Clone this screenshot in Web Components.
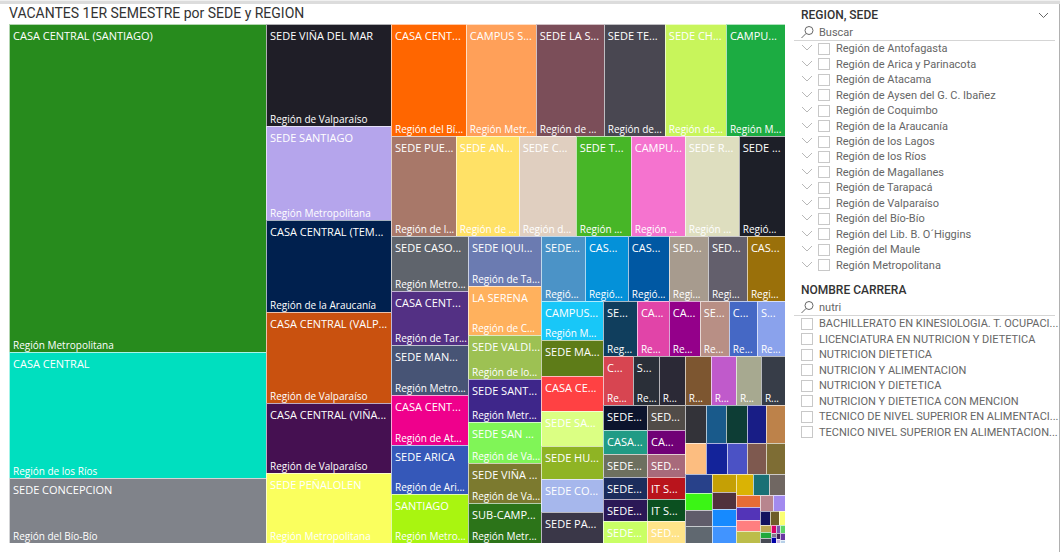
<!DOCTYPE html>
<html lang="es">
<head>
<meta charset="utf-8">
<title>Vacantes 1er semestre</title>
<style>
  html, body { margin: 0; background: #fff; }
  body { font-family: "Open Sans", "Noto Sans", sans-serif; color: #666; }
</style>
</head>
<body>
<vacancy-report></vacancy-report>

<script>
const sheet = (root, html) => {
  const t = document.createElement('template');
  t.innerHTML = html;
  root.append(t.content.cloneNode(true));
};

/* Treemap data: [share, colour, name, region] for a tile,
   [share, 'row' | 'col', [children]] for a group. */
const SMALLEST = [18, 'row', [
  [11, 'col', [[7, '#bba852'], [6, '#20a93c'], [5, '#474a54']]],
  [5, 'col', [[8, '#d80065'], [4, '#817b8a'], [6, '#0000a8']]],
  [4, 'col', [[8, '#7956ae'], [6, '#402458'], [4, '#c9b4df']]],
  [5, 'col', [[8, '#5dd668'], [7, '#6938a2'], [3, '#b7d0e8']]],
]];
const SMALLER = [48, 'row', [
  [24, 'col', [[12, '#e66c36'], [13, '#5334b8'], [11, '#ff7f80'], [12, '#bcbd4a']]],
  [25, 'col', [
    [16, 'row', [[13, '#b8858e'], [12, '#a28aef']]],
    [14, 'row', [[10, '#12145f'], [9, '#6e5d28'], [6, '#fbff73']]],
    SMALLEST,
  ]],
]];
const SMALL = [100, 'col', [
  [38, 'row', [[21, '#333339'], [20, '#195a8b'], [21, '#0d3d35'], [19, '#181d86'], [19, '#bd824a']]],
  [31, 'row', [[21, '#fcbd80'], [21, '#13239a'], [20, '#4b52c5'], [19, '#7e594f'], [19, '#7e6d34']]],
  [69, 'row', [
    [27, 'col', [[19, '#28418a'], [17, '#3bf515'], [16, '#605c6a'], [17, '#606870']]],
    [24, 'col', [[18, '#c5a005'], [17, '#51323c'], [17, '#168aff'], [17, '#4194ff']]],
    [49, 'col', [
      [21, 'row', [[17, '#dab304'], [16, '#197075'], [16, '#706762']]],
      SMALLER,
    ]],
  ]],
]];
const MEDIUM = [182, 'col', [
  [55, 'row', [
    [34, '#103e5d', 'SE...', 'Reg...'],
    [32, '#e144a8', 'CA...', 'Re...'],
    [31, '#94008a', 'CA...', 'Re...'],
    [29, '#b88f85', 'SE...', 'Re...'],
    [28, '#4568c5', 'C...', 'Re...'],
    [28, '#8aa2ec', 'S...', 'Re...'],
  ]],
  [49, 'row', [
    [30, '#d74551', 'C...', 'Re...'],
    [26, '#2a2f38', 'S...', 'Re...'],
    [26, '#2b2936', '', 'R...'],
    [26, '#7d5630', '', 'R...'],
    [25, '#c05acb', '', 'R...'],
    [25, '#a7a990', '', 'R...'],
    [24, '#373d48', '', 'R...'],
  ]],
  [138, 'row', [
    [44, 'col', [
      [25, '#0c142d', 'SEDE...'],
      [24, '#219b85', 'CASA...'],
      [23, '#6d705f', 'SEDE...'],
      [22, '#1c2d5c', 'SEDE...'],
      [22, '#2b1856', 'SEDE...'],
      [22, '#c9ff65', 'SEDE...'],
    ]],
    [38, 'col', [
      [25, '#514c48', 'SED...'],
      [24, '#700076', 'CA...'],
      [23, '#a86a7b', 'SED...'],
      [22, '#b9141c', 'IT S...'],
      [22, '#0b5020', 'IT S...'],
      [22, '#ffe489', 'SED...'],
    ]],
    SMALL,
  ]],
]];
const LARGE = [307, 'row', [
  [77, 'col', [
    [55, '#5f646c', 'SEDE CASO...', 'Región Metro...'],
    [54, '#533084', 'CASA CENT...', 'Región de Tar...'],
    [50, '#475475', 'SEDE MAN...', 'Región Metro...'],
    [50, '#ef008c', 'CASA CENT...', 'Región de At...'],
    [49, '#3558b9', 'SEDE ARICA', 'Región de Ari...'],
    [49, '#a9f510', 'SANTIAGO', 'Región Metro...'],
  ]],
  [73, 'col', [
    [50, '#6b7bb1', 'SEDE IQUI...', 'Región de Ta...'],
    [49, '#ffb15d', 'LA SERENA', 'Región de C...'],
    [44, '#9dc153', 'SEDE VALDI...', 'Región de lo...'],
    [43, '#3e268a', 'SEDE SANT...', 'Región Metr...'],
    [41, '#80f557', 'SEDE SAN ...', 'Región de Va...'],
    [40, '#7c7a2f', 'SEDE VIÑA ...', 'Región de Va...'],
    [40, '#2c7419', 'SUB-CAMP...', 'Región Metr...'],
  ]],
  [244, 'col', [
    [65, 'row', [
      [44, '#4b93c7', 'SEDE...', 'Regió...'],
      [43, '#0491d9', 'CAS...', 'Regió...'],
      [41, '#0058a3', 'CAS...', 'Regió...'],
      [39, '#a79b8e', 'SED...', 'Regi...'],
      [39, '#635f6c', 'SED...', 'Regi...'],
      [38, '#9a700a', 'CAS...', 'Regi...'],
    ]],
    [242, 'row', [
      [62, 'col', [
        [39, '#18c7f8', 'CAMPUS...', 'Región M...'],
        [36, '#5e7c18', 'SEDE MA...'],
        [35, '#ff4143', 'CASA CE...'],
        [35, '#dbff83', 'SEDE SA...'],
        [33, '#8fb424', 'SEDE HU...'],
        [33, '#a6b7ec', 'SEDE CO...'],
        [31, '#3a3748', 'SEDE PA...'],
      ]],
      MEDIUM,
    ]],
  ]],
]];
const DATA = [100, 'row', [
  [257, 'col', [
    [330, '#278b1d', 'CASA CENTRAL (SANTIAGO)', 'Región Metropolitana'],
    [125, '#00dfbf', 'CASA CENTRAL', 'Región de los Ríos'],
    [65, '#80838a', 'SEDE CONCEPCION', 'Región del Bío-Bío'],
  ]],
  [125, 'col', [
    [102, '#1f1e27', 'SEDE VIÑA DEL MAR', 'Región de Valparaíso'],
    [94, '#b5a5ec', 'SEDE SANTIAGO', 'Región Metropolitana'],
    [92, '#00204e', 'CASA CENTRAL (TEM...', 'Región de la Araucanía'],
    [91, '#c9510f', 'CASA CENTRAL (VALP...', 'Región de Valparaíso'],
    [70, '#451051', 'CASA CENTRAL (VIÑA...', 'Región de Valparaíso'],
    [70, '#faff5e', 'SEDE PEÑALOLEN', 'Región Metropolitana'],
  ]],
  [394, 'col', [
    [112, 'row', [
      [75, '#ff6600', 'CASA CENT...', 'Región del Bí...'],
      [70, '#ffa059', 'CAMPUS S...', 'Región Metr...'],
      [68, '#7b4e59', 'SEDE LA S...', 'Región de ...'],
      [61, '#494751', 'SEDE TE...', 'Región de...'],
      [61, '#c8f55b', 'SEDE CH...', 'Región de...'],
      [59, '#1cac42', 'CAMPU...', 'Región M...'],
    ]],
    [100, 'row', [
      [65, '#a87869', 'SEDE PUE...', 'Región de l...'],
      [63, '#ffe166', 'SEDE AN...', 'Región de ...'],
      [57, '#e0cfc0', 'SEDE C...', 'Región d...'],
      [55, '#47b627', 'SEDE T...', 'Región ...'],
      [54, '#f573cf', 'CAMPU...', 'Región ...'],
      [54, '#dedebf', 'SEDE R...', 'Región ...'],
      [46, '#1d1f28', 'SEDE ...', 'Regió...'],
    ]],
    LARGE,
  ]],
]];

class TreeTile extends HTMLElement {
  connectedCallback() {
    const root = this.attachShadow({ mode: 'open' });
    sheet(root, `<style>
      :host { display: flex; flex-direction: column; justify-content: space-between; box-sizing: border-box;
        min-width: 0; min-height: 0; overflow: hidden; color: #fff; white-space: nowrap;
        border-top: 1px solid rgba(255,255,255,.65); border-left: 1px solid rgba(255,255,255,.65); }
      .name { padding: 2px 0 0 3px; font-size: 11px; line-height: 17px; }
      .region { padding-left: 3px; margin-top: auto; font-size: 10px; line-height: 14px; }
    </style>`);
    for (const part of ['name', 'region']) {
      const text = this.getAttribute(part);
      if (!text) continue;
      const el = document.createElement('div');
      el.className = part;
      el.textContent = text;
      root.append(el);
    }
  }
}

class TreeGroup extends HTMLElement {
  connectedCallback() {
    sheet(this.attachShadow({ mode: 'open' }), `<style>
      :host { display: flex; min-width: 0; min-height: 0; }
      :host([flow="col"]) { flex-direction: column; }
    </style><slot></slot>`);
  }
}

class TreeMap extends HTMLElement {
  connectedCallback() {
    const root = this.attachShadow({ mode: 'open' });
    sheet(root, `<style>
      :host { display: flex; min-height: 0; }
    </style>`);
    root.append(this.build(DATA));
  }
  build([share, kind, third, region]) {
    let el;
    if (Array.isArray(third)) {
      el = document.createElement('tree-group');
      el.setAttribute('flow', kind);
      third.forEach(child => el.append(this.build(child)));
    } else {
      el = document.createElement('tree-tile');
      if (third) el.setAttribute('name', third);
      if (region) el.setAttribute('region', region);
      el.style.background = kind;
    }
    el.style.flex = `${share} 1 0px`;
    return el;
  }
}

class SlicerItem extends HTMLElement {
  connectedCallback() {
    const open = this.hasAttribute('expandable')
      ? `<button type="button" aria-label="Expandir"><svg width="12" height="7" viewBox="0 0 12 7"><path d="M1 1l5 5 5-5" fill="none" stroke="#b8b8b8"/></svg></button>` : '';
    sheet(this.attachShadow({ mode: 'open' }), `<style>
      :host { display: flex; align-items: center; min-width: 0; min-height: 0; }
      button { display: flex; align-items: center; width: 12px; height: 12px; padding: 0 0 2px; margin-right: 5px; border: 0; background: none; }
      label { display: flex; align-items: center; min-width: 0; gap: 6px; font: 11px/15px Roboto, sans-serif; white-space: nowrap; }
      input { appearance: none; flex: none; box-sizing: border-box; width: 12px; height: 12px; margin: 0; border: 1px solid #c8c8c8; background: #fff; }
    </style>${open}<label><input type="checkbox"><span><slot></slot></span></label>`);
  }
}

class SlicerPanel extends HTMLElement {
  connectedCallback() {
    const menu = this.hasAttribute('menu')
      ? `<button type="button" aria-label="Más"><svg width="11" height="7" viewBox="0 0 11 7"><path d="M1 1l4.500 4.500 4.500-4.500" fill="none" stroke="#666"/></svg></button>` : '';
    sheet(this.attachShadow({ mode: 'open' }), `<style>
      :host { display: block; }
      header { display: flex; justify-content: space-between; align-items: center; padding: 0 6px 0 7px; }
      h2 { margin: 0; font: 500 12px/18px Roboto, sans-serif; color: #333; }
      button { display: flex; padding: 0; border: 0; background: none; }
      .search { display: flex; align-items: center; gap: 5px; height: 16px; padding-left: 7px; border-bottom: 1px solid #d5d5d5; }
      svg { flex: none; }
      input { flex: 1; min-width: 0; height: 16px; padding: 0; border: 0; outline: 0; background: none; font: 11px Roboto, sans-serif; color: #666; }
      input::placeholder { color: #666; opacity: 1; }
      .list { display: grid; grid-auto-rows: minmax(0, 1fr); height: var(--list-height); padding-left: 7px; }
      slot { display: contents; }
    </style>
    <header><h2>${this.getAttribute('heading')}</h2>${menu}</header>
    <div class="search">
      <svg width="13" height="13" viewBox="0 0 13 13" fill="none" stroke="#666"><circle cx="8" cy="4.500" r="4"/><path d="M5 7.500L.5 12"/></svg>
      <input type="text" aria-label="Buscar" placeholder="Buscar" value="${this.getAttribute('query') || ''}">
    </div>
    <div class="list"><slot></slot></div>`);
  }
}

const REGIONS = ['Región de Antofagasta', 'Región de Arica y Parinacota', 'Región de Atacama',
  'Región de Aysen del G. C. Ibañez', 'Región de Coquimbo', 'Región de la Araucanía', 'Región de los Lagos',
  'Región de los Ríos', 'Región de Magallanes', 'Región de Tarapacá', 'Región de Valparaíso',
  'Región del Bío-Bío', 'Región del Lib. B. O´Higgins', 'Región del Maule', 'Región Metropolitana'];
const CAREERS = ['BACHILLERATO EN KINESIOLOGIA. T. OCUPACI...', 'LICENCIATURA EN NUTRICION Y DIETETICA',
  'NUTRICION DIETETICA', 'NUTRICION Y ALIMENTACION', 'NUTRICION Y DIETETICA',
  'NUTRICION Y DIETETICA CON MENCION', 'TECNICO DE NIVEL SUPERIOR EN ALIMENTACI...',
  'TECNICO NIVEL SUPERIOR EN ALIMENTACION...'];

class VacancyReport extends HTMLElement {
  connectedCallback() {
    sheet(this.attachShadow({ mode: 'open' }), `<style>
      :host { display: flex; flex-direction: column; min-height: 100vh; }
      .bar { height: 3px; border-top: 1px solid #f0f0f0; background: #dcdcdc; }
      main { flex: 1; display: grid; grid-template-columns: minmax(0, 776fr) minmax(0, 261fr); gap: 9px;
        padding: 0 4px 0 9px; border-right: 1px solid #b0b0b0; }
      section { display: flex; flex-direction: column; padding-bottom: 9px; }
      h1 { margin: 0; padding-bottom: 2px; font: 400 14px/18px Roboto, sans-serif; color: #333; }
      tree-map { flex: 1; }
      aside { display: flex; flex-direction: column; gap: 8px; padding-top: 2px; }
      .regions { --list-height: 232px; }
      .careers { --list-height: 124px; }
    </style>
    <div class="bar"></div>
    <main>
      <section><h1>VACANTES 1ER SEMESTRE por SEDE y REGION</h1><tree-map></tree-map></section>
      <aside>
        <slicer-panel class="regions" heading="REGION, SEDE" menu>${REGIONS.map(r => `<slicer-item expandable>${r}</slicer-item>`).join('')}</slicer-panel>
        <slicer-panel class="careers" heading="NOMBRE CARRERA" query="nutri">${CAREERS.map(c => `<slicer-item>${c}</slicer-item>`).join('')}</slicer-panel>
      </aside>
    </main>`);
  }
}

customElements.define('tree-tile', TreeTile);
customElements.define('tree-group', TreeGroup);
customElements.define('tree-map', TreeMap);
customElements.define('slicer-item', SlicerItem);
customElements.define('slicer-panel', SlicerPanel);
customElements.define('vacancy-report', VacancyReport);
</script>
</body>
</html>
